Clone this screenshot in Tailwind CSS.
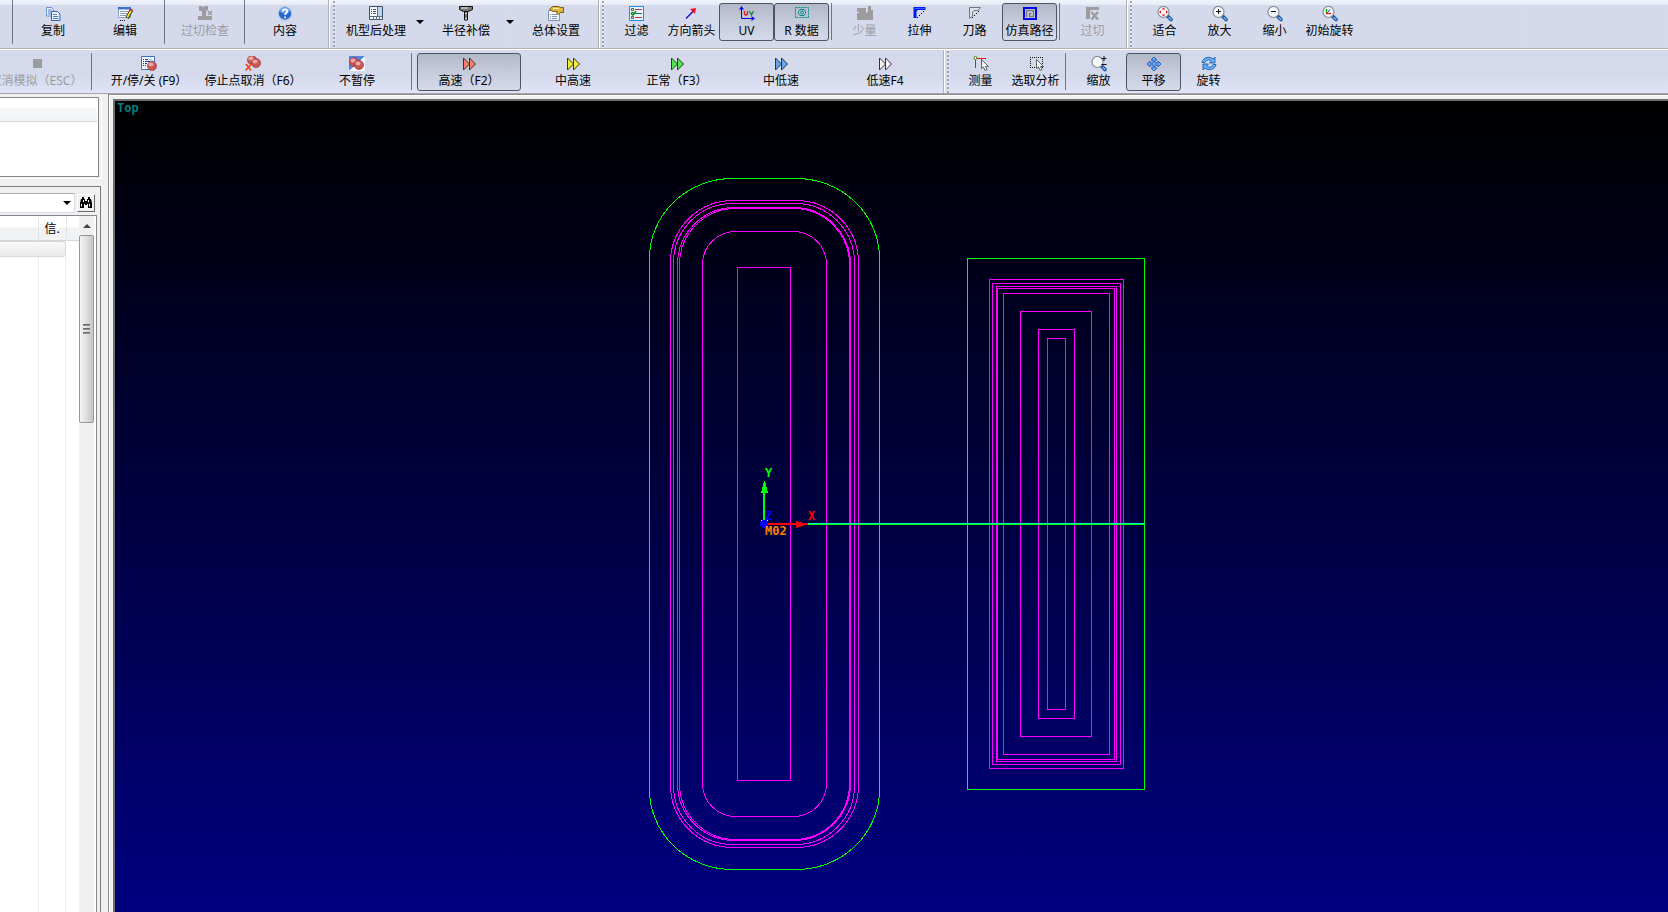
<!DOCTYPE html>
<html lang="zh-CN">
<head>
    <meta charset="UTF-8">
    <meta name="viewport" content="width=device-width, initial-scale=1.0">
    <title>刀路仿真</title>
    <script src="https://cdn.jsdelivr.net/npm/@tailwindcss/browser@4"></script>
</head>
<body class="h-screen flex flex-col overflow-hidden bg-[#f0f0f0] font-['Noto_Sans','Noto_Sans_CJK_SC',sans-serif] text-xs leading-[18px] text-black">

    <!-- shared icon parts -->
    <svg class="hidden">
        <symbol id="ff" viewBox="0 0 16 16">
            <path d="M2.500 2v12l6-6zM8.500 2v12l6-6z" stroke="#333" stroke-width="1"/>
        </symbol>
        <symbol id="lens" viewBox="0 0 16 16">
            <path d="M10.500 10l3.500 3.500" stroke="#1c4fa0" stroke-width="3.600" stroke-linecap="round"/>
            <path d="M12 11.500l2 2" stroke="#7ab4f0" stroke-width="1.500" stroke-linecap="round"/>
            <circle cx="6.500" cy="6" r="5.500" fill="#f4f8fa" stroke="#858d95" stroke-width="1.200"/>
        </symbol>
        <symbol id="ball" viewBox="0 0 10 10">
            <circle cx="5" cy="5" r="4.600" fill="#c85454" stroke="#983838" stroke-width=".6"/>
            <ellipse cx="4" cy="3.500" rx="2.600" ry="1.900" fill="#eaa8a4"/>
        </symbol>
    </svg>

    <header class="shrink-0">
        <!-- first toolbar row -->
        <div class="flex h-[50px] border-b border-white bg-linear-to-b from-[#f1f4fb] from-0% via-[#e6ebf6] via-10% to-[#d4daec] to-10%">
            <div role="toolbar" aria-label="编辑" class="flex shrink-0 h-[49px] pt-[3px] pl-[9px] pr-[7px] border-r border-b border-[#b1b1b4]">
                <span class="w-2 shrink-0 -mt-[3px] h-11 pl-[3px]"><i class="block w-px h-full bg-[#6f7687]"></i></span>
                <button class="w-[72px] h-[38px] flex flex-col items-center pt-[3px] whitespace-nowrap">
                    <svg class="size-4" viewBox="0 0 16 16"><path d="M1.500 1.500h5l2 2v6.500h-7z" fill="#eef4fd" stroke="#6b93cd"/><path d="M3 4h4M3 6h4M3 8h3" stroke="#4f7fc4"/><path d="M6.500 5.500h6l2.500 2.500v6.500H6.500z" fill="#eaf2fd" stroke="#2f63ad"/><path d="M8 8.500h4M8 10.500h5.500M8 12.500h5.500" stroke="#4f7fc4"/></svg>
                    <span>复制</span>
                </button>
                <button class="w-[72px] h-[38px] flex flex-col items-center pt-[3px] whitespace-nowrap">
                    <svg class="size-4" viewBox="0 0 16 16"><path d="M1.500 1.500h12v10h-12z" fill="#fff" stroke="#8ba0c4"/><path d="M1 1h13v2.500H1z" fill="#3b6fd0"/><path d="M3 5.500h8M3 7.500h7M3 9.500h6" stroke="#8b9bb8"/><path d="M10 12l4.500-8" stroke="#222" stroke-width="3.600"/><path d="M10.200 11.500l4-7" stroke="#f4dc28" stroke-width="2"/><path d="M13.500 3.500l2 1" stroke="#d33" stroke-width="2"/><path d="M3 14.500h6" stroke="#111" stroke-dasharray="1 1"/></svg>
                    <span>编辑</span>
                </button>
                <span class="w-2 shrink-0 -mt-[3px] h-11 pl-[3px]"><i class="block w-px h-full bg-[#6f7687]"></i></span>
                <button disabled class="w-[72px] h-[38px] flex flex-col items-center pt-[3px] whitespace-nowrap text-[#9c9c9f]">
                    <svg class="size-4" viewBox="0 0 16 16"><path d="M2 0h3v1h2V0h4v4L9 5v5h6v4H1v-4h4V5H2z" fill="#9c9c9f"/><path d="M11 5l4 4M15 5l-4 4" stroke="#9c9c9f" stroke-width="1.600"/></svg>
                    <span>过切检查</span>
                </button>
                <span class="w-2 shrink-0 -mt-[3px] h-11 pl-[3px]"><i class="block w-px h-full bg-[#6f7687]"></i></span>
                <button class="w-[72px] h-[38px] flex flex-col items-center pt-[3px] whitespace-nowrap">
                    <svg class="size-4" viewBox="0 0 16 16"><circle cx="8" cy="7.500" r="6.800" fill="#2468d0" stroke="#bccbe6" stroke-width="1.300"/><ellipse cx="8" cy="4.500" rx="5" ry="3" fill="#6ea6ee"/><path d="M5.700 5.600c0-3 4.700-3 4.700-.3 0 1.800-2.300 1.700-2.300 3.700M8 10.500v1.700" fill="none" stroke="#fff" stroke-width="1.700"/></svg>
                    <span>内容</span>
                </button>
            </div>

            <div role="toolbar" aria-label="设置" class="flex shrink-0 h-[49px] pt-[3px] pr-1.5 border-r border-b border-[#b1b1b4]">
                <span class="w-[11px] shrink-0 -mt-[3px] h-12 pl-[3px] border-l border-white"><i class="block w-[3px] h-full bg-[radial-gradient(circle_at_1px_2px,#9da2b1_1px,#f2f4f9_1px,transparent_2px)] bg-[length:3px_4px]"></i></span>
                <button class="w-[72px] h-[38px] flex flex-col items-center pt-[3px] whitespace-nowrap">
                    <svg class="size-4" viewBox="0 0 16 16"><path d="M1.500.5h13v13h-13z" fill="#f4f9fd" stroke="#3d5068"/><path d="M10 1h4v9h-4z" fill="#b9d4ea"/><path d="M2 10.500h12M9.500 1v9M5.500 11v3M8.500 11v3M11.500 11v3" stroke="#5b6f86"/><path d="M3 3.500h1m1 0h3M3 5.500h1m1 0h3M3 7.500h1m1 0h3" stroke="#555"/></svg>
                    <span>机型后处理</span>
                </button>
                <button aria-label="机型后处理选项" class="w-[18px] h-[38px] flex pt-[17px] pl-1"><svg class="w-2 h-1" viewBox="0 0 8 4"><path d="M0 0h8L4 4z"/></svg></button>
                <button class="w-[72px] h-[38px] flex flex-col items-center pt-[3px] whitespace-nowrap">
                    <svg class="size-4" viewBox="0 0 16 16"><path d="M1.500.5h13v3l-4 2h-5l-4-2z" fill="#777" stroke="#111"/><path d="M3 2h7" stroke="#eee"/><path d="M6.500 6h3v8h-3z" fill="#ddd" stroke="#111"/><path d="M6 9h4M6 11h4" stroke="#111"/></svg>
                    <span>半径补偿</span>
                </button>
                <button aria-label="半径补偿选项" class="w-[18px] h-[38px] flex pt-[17px] pl-1"><svg class="w-2 h-1" viewBox="0 0 8 4"><path d="M0 0h8L4 4z"/></svg></button>
                <button class="w-[72px] h-[38px] flex flex-col items-center pt-[3px] whitespace-nowrap">
                    <svg class="size-4" viewBox="0 0 16 16"><path d="M.5 4.500h11v10H.5z" fill="#f7fafe" stroke="#7e90ac"/><path d="M2 8.500h1m1 0h5M2 10.500h1m1 0h5M2 12.500h1m1 0h5" stroke="#7e93b8"/><path d="M1.500 3.500l3-3h6l2 1H15.500v5h-3l-2 2-2-1 1-2H6L4 5z" fill="#e0b840" stroke="#6e5010" stroke-width=".9"/><path d="M5 2.500h6" stroke="#fff2a4"/></svg>
                    <span>总体设置</span>
                </button>
            </div>

            <div role="toolbar" aria-label="显示" class="flex shrink-0 h-[49px] pt-[3px] pr-1.5 border-r border-b border-[#b1b1b4]">
                <span class="w-2.5 shrink-0 -mt-[3px] h-12 pl-[2px] border-l border-white"><i class="block w-[3px] h-full bg-[radial-gradient(circle_at_1px_2px,#9da2b1_1px,#f2f4f9_1px,transparent_2px)] bg-[length:3px_4px]"></i></span>
                <button class="w-[55px] h-[38px] flex flex-col items-center pt-[3px] whitespace-nowrap">
                    <svg class="size-4" viewBox="0 0 16 16"><path d="M.5.5h14v14H.5z" fill="#eaf4ff" stroke="#1690f0"/><path d="M2.500 2.500h2v2h-2zM2.500 6.500h2v2h-2zM2.500 10.500h2v2h-2z" fill="#fff" stroke="#555"/><path d="M6 3.500h7M6 11.500h7" stroke="#c03048"/><path d="M6 7.500h7" stroke="#187050"/><path d="M2 7l2 2 3-4" fill="none" stroke="#00a000" stroke-width="1.500"/></svg>
                    <span>过滤</span>
                </button>
                <button class="w-[55px] h-[38px] flex flex-col items-center pt-[3px] whitespace-nowrap">
                    <svg class="size-4" viewBox="0 0 16 16"><path d="M2 12.500l8-8" stroke="#0000d0" stroke-width="1.300"/><path d="M6 3l6-1-1 6z" fill="#f01020"/></svg>
                    <span>方向箭头</span>
                </button>
                <button aria-pressed="true" class="w-[55px] h-[38px] flex flex-col items-center pt-0.5 whitespace-nowrap border border-[#50545f] rounded-[3px] bg-linear-to-b from-[#b3b8c8] via-[#c6cbdb] to-[#d5daea]">
                    <svg class="size-4" viewBox="0 0 16 16"><path d="M2.500 1v11.500h12" fill="none" stroke="#0000f0"/><path d="M0 3.500L2.500 0 5 3.500zM12.500 10l3.500 2.500-3.500 2.500z" fill="#0000f0"/><path d="M5.500 5v3q1.500 2 3 0V5" fill="none" stroke="#e02020" stroke-width="1.300"/><path d="M10.500 5l2 4 2-4" fill="none" stroke="#008030" stroke-width="1.200"/></svg>
                    <span>UV</span>
                </button>
                <button aria-pressed="true" class="w-[55px] h-[38px] flex flex-col items-center pt-0.5 whitespace-nowrap border border-[#50545f] rounded-[3px] bg-linear-to-b from-[#b3b8c8] via-[#c6cbdb] to-[#d5daea]">
                    <svg class="size-4" viewBox="0 0 16 16"><g fill="none" stroke="#008c8c"><path d="M1.500 1.500h13v10h-13z" stroke-dasharray="2 1"/><path d="M6 3.500h4l1.500 2v2l-1.500 2H6l-1.500-2v-2z"/><circle cx="8" cy="6.500" r="1.500"/></g></svg>
                    <span>R 数据</span>
                </button>
                <span class="w-2 shrink-0 h-[37px] pl-[2px]"><i class="block w-px h-full bg-[#6f7687]"></i></span>
                <button disabled class="w-[55px] h-[38px] flex flex-col items-center pt-[3px] whitespace-nowrap text-[#9c9c9f]">
                    <svg class="size-4" viewBox="0 0 16 16"><path d="M0 2h9v4l-1 1 3-1V0h3v4h2v10H0V7h2V6H0z" fill="#9c9c9f"/></svg>
                    <span>少量</span>
                </button>
                <button class="w-[55px] h-[38px] flex flex-col items-center pt-[3px] whitespace-nowrap">
                    <svg class="size-4" viewBox="0 0 16 16"><path d="M1.500 1h12v3H6L4.500 5.500V12h-3z" fill="#0018f8"/><path d="M2.500 2.500h10" stroke="#2860ff"/><path d="M5 12l8-8" stroke="#000" stroke-dasharray="1.400 1.400"/></svg>
                    <span>拉伸</span>
                </button>
                <button class="w-[55px] h-[38px] flex flex-col items-center pt-[3px] whitespace-nowrap">
                    <svg class="size-4" viewBox="0 0 16 16"><path d="M2.500 12.500v-11h11l-2.500 3H7L5.500 6v4z" fill="#dfe3ee" stroke="#777"/><path d="M5 12l8-8" stroke="#000" stroke-dasharray="1.400 1.400"/></svg>
                    <span>刀路</span>
                </button>
                <button aria-pressed="true" class="w-[55px] h-[38px] flex flex-col items-center pt-0.5 whitespace-nowrap border border-[#50545f] rounded-[3px] bg-linear-to-b from-[#b3b8c8] via-[#c6cbdb] to-[#d5daea]">
                    <svg class="size-4" viewBox="0 0 16 16"><path d="M2 2h12v11H2z" fill="#ccd0df" stroke="#0000f8" stroke-width="2"/><path d="M4.500 11V4.500h7v6h-4V7.500h2" fill="none" stroke="#777" stroke-width="1.400"/></svg>
                    <span>仿真路径</span>
                </button>
                <span class="w-2 shrink-0 h-[37px] pl-[2px]"><i class="block w-px h-full bg-[#6f7687]"></i></span>
                <button disabled class="w-[55px] h-[38px] flex flex-col items-center pt-[3px] whitespace-nowrap text-[#9c9c9f]">
                    <svg class="size-4" viewBox="0 0 16 16"><path d="M1 1h13v3H6L5 5.500V13H1z" fill="#9c9c9f"/><path d="M6.500 6l6.500 7.500M13 6l-6.500 7.500" stroke="#9c9c9f" stroke-width="2.500"/></svg>
                    <span>过切</span>
                </button>
            </div>

            <div role="toolbar" aria-label="缩放" class="flex grow h-[49px] pt-[3px] border-b border-[#b1b1b4]">
                <span class="w-2.5 shrink-0 -mt-[3px] h-12 pl-[2px] border-l border-white"><i class="block w-[3px] h-full bg-[radial-gradient(circle_at_1px_2px,#9da2b1_1px,#f2f4f9_1px,transparent_2px)] bg-[length:3px_4px]"></i></span>
                <button class="w-[55px] h-[38px] flex flex-col items-center pt-[3px] whitespace-nowrap">
                    <svg class="size-4" viewBox="0 0 16 16"><use href="#lens"/><path d="M6.500 1.500l1.800 2H4.700zM6.500 10.500l1.800-2H4.700zM2 6l2-1.800v3.600zM11 6L9 4.200v3.600z" fill="#e01818"/></svg>
                    <span>适合</span>
                </button>
                <button class="w-[55px] h-[38px] flex flex-col items-center pt-[3px] whitespace-nowrap">
                    <svg class="size-4" viewBox="0 0 16 16"><use href="#lens"/><path d="M4 5.500h5M6.500 3v5" stroke="#111"/></svg>
                    <span>放大</span>
                </button>
                <button class="w-[55px] h-[38px] flex flex-col items-center pt-[3px] whitespace-nowrap">
                    <svg class="size-4" viewBox="0 0 16 16"><use href="#lens"/><path d="M4 5.500h5" stroke="#111"/></svg>
                    <span>缩小</span>
                </button>
                <button class="w-[55px] h-[38px] flex flex-col items-center pt-[3px] whitespace-nowrap">
                    <svg class="size-4" viewBox="0 0 16 16"><use href="#lens"/><path d="M4.500 3v5" stroke="#00a000" stroke-width="1.300"/><path d="M4 7.500h5" stroke="#e01818" stroke-width="1.300"/><path d="M5.500 6.500l2.500-3" stroke="#1030e0"/></svg>
                    <span>初始旋转</span>
                </button>
            </div>
        </div>

        <!-- second toolbar row -->
        <div class="flex h-11 border-b border-[#a5a5b2] bg-linear-to-b from-[#d4daec] from-60% to-[#dfe5f6]">
            <div role="toolbar" aria-label="模拟" class="flex shrink-0 pt-[3px] pr-1.5 -ml-4 border-r border-[#b1b1b4]">
                <button disabled class="w-26 h-[38px] flex flex-col items-center pt-[3px] whitespace-nowrap text-[#9c9c9f]">
                    <svg class="size-4" viewBox="0 0 16 16"><path d="M5 3h9v9H5z" fill="#9c9c9f"/></svg>
                    <span>取消模拟（ESC）</span>
                </button>
                <span class="w-[9px] shrink-0 h-[37px] pl-[3px]"><i class="block w-px h-full bg-[#6f7687]"></i></span>
                <button class="w-26 h-[38px] flex flex-col items-center pt-[3px] whitespace-nowrap">
                    <svg class="size-4" viewBox="0 0 16 16"><path d="M.5.5h13v13H.5z" fill="#f4f9ff" stroke="#3a70c8"/><path d="M2 3.500h1m1 0h3M2 5.500h1m1 0h5M2 7.500h1m1 0h2M2 9.500h1m1 0h1" stroke="#103890"/><path d="M9 3l4 4" stroke="#a8c8ee" stroke-width="2"/><use href="#ball" x="6" y="5" width="10" height="10"/></svg>
                    <span>开/停/关 (F9）</span>
                </button>
                <button class="w-26 h-[38px] flex flex-col items-center pt-[3px] whitespace-nowrap">
                    <svg class="size-4" viewBox="0 0 16 16"><use href="#ball" x="2" y="-1" width="10" height="10"/><use href="#ball" x="6" y="2" width="10" height="10"/><path d="M1 8l5 6.500M6.500 8L.5 14.500" stroke="#f04818" stroke-width="1.700"/></svg>
                    <span>停止点取消（F6）</span>
                </button>
                <button class="w-26 h-[38px] flex flex-col items-center pt-[3px] whitespace-nowrap">
                    <svg class="size-4" viewBox="0 0 16 16"><path d="M0 0h16v15H0z" fill="#fff"/><path d="M0 0h16L1 14H0z" fill="#5584e0"/><use href="#ball" x="0" y="1" width="10" height="10"/><use href="#ball" x="5" y="4" width="10" height="10"/></svg>
                    <span>不暂停</span>
                </button>
                <span class="w-2 shrink-0 h-[37px] pl-[2px]"><i class="block w-px h-full bg-[#6f7687]"></i></span>
                <button aria-pressed="true" class="w-26 h-[38px] flex flex-col items-center pt-0.5 whitespace-nowrap border border-[#50545f] rounded-[3px] bg-linear-to-b from-[#b3b8c8] via-[#c6cbdb] to-[#d5daea]">
                    <svg class="size-4 fill-[#ff8068]"><use href="#ff"/></svg>
                    <span>高速（F2）</span>
                </button>
                <button class="w-26 h-[38px] flex flex-col items-center pt-[3px] whitespace-nowrap">
                    <svg class="size-4 fill-[#f4f030]"><use href="#ff"/></svg>
                    <span>中高速</span>
                </button>
                <button class="w-26 h-[38px] flex flex-col items-center pt-[3px] whitespace-nowrap">
                    <svg class="size-4 fill-[#50e850]"><use href="#ff"/></svg>
                    <span>正常（F3）</span>
                </button>
                <button class="w-26 h-[38px] flex flex-col items-center pt-[3px] whitespace-nowrap">
                    <svg class="size-4 fill-[#60a4f8]"><use href="#ff"/></svg>
                    <span>中低速</span>
                </button>
                <button class="w-26 h-[38px] flex flex-col items-center pt-[3px] whitespace-nowrap">
                    <svg class="size-4 fill-[#f4f4f4]"><use href="#ff"/></svg>
                    <span>低速F4</span>
                </button>
            </div>

            <div role="toolbar" aria-label="视图" class="flex grow pt-[3px]">
                <span class="w-[9px] shrink-0 -mt-[3px] h-[43px] pl-[2px] border-l border-white"><i class="block w-[3px] h-full bg-[radial-gradient(circle_at_1px_2px,#9da2b1_1px,#f2f4f9_1px,transparent_2px)] bg-[length:3px_4px]"></i></span>
                <button class="w-[55px] h-[38px] flex flex-col items-center pt-[3px] whitespace-nowrap">
                    <svg class="size-4" viewBox="0 0 16 16"><path d="M2.500 12V2.500H13M8.500 2v6" fill="none" stroke="#f01020"/><circle cx="2.500" cy="2" r="1.500" fill="#fff" stroke="#408000"/><path d="M8.500 3.500v9l2-1.500 1.500 3.500 2-1-1.500-3h3z" fill="#f4f4f4" stroke="#555" stroke-width=".9"/></svg>
                    <span>测量</span>
                </button>
                <button class="w-[55px] h-[38px] flex flex-col items-center pt-[3px] whitespace-nowrap">
                    <svg class="size-4" viewBox="0 0 16 16"><path d="M2 1.500h13M2 11.500h13M2.500 1v11M14.500 1v11" stroke="#111" stroke-dasharray="1 1"/><path d="M8.500 3.500v9l2-1.500 1.500 3.500 2-1-1.500-3h3z" fill="#f4f4f4" stroke="#555" stroke-width=".9"/></svg>
                    <span>选取分析</span>
                </button>
                <span class="w-2 shrink-0 h-[37px] pl-[2px]"><i class="block w-px h-full bg-[#6f7687]"></i></span>
                <button class="w-[55px] h-[38px] flex flex-col items-center pt-[3px] whitespace-nowrap">
                    <svg class="size-4" viewBox="0 0 16 16"><use href="#lens"/><path d="M10.500 2.500h5M13 0v5M10.500 8.500h5" stroke="#111"/></svg>
                    <span>缩放</span>
                </button>
                <button aria-pressed="true" class="w-[55px] h-[38px] flex flex-col items-center pt-0.5 whitespace-nowrap border border-[#50545f] rounded-[3px] bg-linear-to-b from-[#b3b8c8] via-[#c6cbdb] to-[#d5daea]">
                    <svg class="size-4" viewBox="0 0 16 16"><path d="M8 1l3 3H9v3h3V5l3 3-3 3V9H9v3h2l-3 3-3-3h2V9H4v2L1 8l3-3v2h3V4H5z" fill="#6cacf4" stroke="#1c58b8" stroke-width=".9"/></svg>
                    <span>平移</span>
                </button>
                <button class="w-[55px] h-[38px] flex flex-col items-center pt-[3px] whitespace-nowrap">
                    <svg class="size-4" viewBox="0 0 16 16"><path d="M1 6.500C2 1 9 0 12 3l2-2v6H8.500l2-2C8 3 5 4 4 6.500zM15 8.500c-1 5.500-8 6.500-11 3.500l-2 2V8h5.500l-2 2c2.500 2 5.500 1 6.500-1.500z" fill="#6cb0f4" stroke="#1c5cb0" stroke-width=".9"/></svg>
                    <span>旋转</span>
                </button>
            </div>
        </div>
    </header>

    <main class="flex grow min-h-0">
        <!-- side panels -->
        <aside class="w-[102px] shrink-0 flex flex-col">
            <section class="h-[85px] pt-[3px] pr-0.5 border-r border-b border-white">
                <div class="h-20 bg-white border-t border-r border-b border-[#828790] pt-2.5">
                    <div class="h-3.5 mr-px bg-linear-to-b from-[#f7f8fa] to-[#f1f2f4] border-b border-[#d5d5d5]"></div>
                </div>
            </section>
            <section class="mt-[7px] mr-px grow min-h-0 flex flex-col border-t border-r border-[#7b7b7b] pr-[3px]">
                <div class="flex items-center h-[28px] pt-1 gap-0.5">
                    <div class="relative w-[75px] shrink-0">
                        <select aria-label="筛选" class="appearance-none block w-full h-5 bg-white border-t border-r border-b border-[#d9dce3] border-t-[#abadb3]"><option></option></select>
                        <svg class="absolute right-1 top-2 w-2 h-1 pointer-events-none" viewBox="0 0 8 4"><path d="M0 0h8L4 4z"/></svg>
                    </div>
                    <button aria-label="查找" class="size-[18px] shrink-0 flex items-center justify-center bg-[#f0f0f0] border border-t-white border-l-white border-r-[#696969] border-b-[#696969]">
                        <svg class="w-3 h-3" viewBox="0 0 12 12"><path d="M2 0h2v2h1v2h2V2h1V0h2v2h1l1 4v5H8V7H7v1H5V7H4v4H0V6l1-4h1z"/><path d="M1.500 7v2.500M9.500 7v2.500M3.500 3v2M8.500 3v2" stroke="#fff"/></svg>
                    </button>
                </div>
                <div class="flex grow min-h-0 bg-white border-t border-r border-[#828790]">
                    <div class="relative grow flex flex-col pt-px">
                        <table class="w-full table-fixed border-collapse">
                            <colgroup><col class="w-[38px]"><col class="w-7"><col></colgroup>
                            <thead class="h-[23px] bg-linear-to-b from-white from-40% to-[#f1f2f4] to-50%">
                                <tr class="border-b border-[#d5d5d5]">
                                    <th aria-label="名称"></th>
                                    <th class="border-x border-[#e0e3e8] font-normal text-left pl-1.5 pt-0.5 h-[23px]">信.</th>
                                    <td></td>
                                </tr>
                            </thead>
                        </table>
                        <div class="grow grid grid-cols-[39px_27px] pt-px">
                            <div class="border-r border-[#e8f0fb]"></div>
                            <div class="border-r border-[#e8f0fb]"></div>
                        </div>
                        <div class="absolute left-0 top-[25px] w-[66px] h-4 border border-l-0 border-[#d9d9d9] rounded-r-[3px] bg-linear-to-b from-[#f8f8f8]/80 to-[#e5e5e5]/80"></div>
                    </div>
                    <div class="w-[15px] shrink-0 mr-0.5 bg-[#f0f0f0] flex flex-col">
                        <div class="h-[19px] flex justify-center items-center"><svg class="w-2 h-1" viewBox="0 0 8 4"><path d="M4 0l4 4H0z" fill="#444"/></svg></div>
                        <div class="h-[188px] border border-[#979797] rounded-[2px] bg-linear-to-r from-[#f5f5f5] via-[#dedee0] via-50% to-[#c4c4ca] flex flex-col items-center justify-center gap-0.5">
                            <i class="w-[7px] h-0.5 bg-linear-to-b from-[#555] to-[#aaa]"></i>
                            <i class="w-[7px] h-0.5 bg-linear-to-b from-[#555] to-[#aaa]"></i>
                            <i class="w-[7px] h-0.5 bg-linear-to-b from-[#555] to-[#aaa]"></i>
                        </div>
                    </div>
                </div>
            </section>
        </aside>

        <!-- tool path view -->
        <section class="ml-1.5 grow min-w-0 border-l border-t border-[#8d8d8d]">
            <div class="h-full border-l border-t border-white pl-[3px] pt-[3px]">
                <div class="relative h-full border-l-2 border-t-2 border-[#6c6e70] bg-linear-to-b/srgb from-black to-[#000080]">
                    <span class="absolute left-0.5 top-0 leading-[14px] font-bold font-['DejaVu_Sans_Mono',monospace] text-[#008080]">Top</span>
                    <svg class="block w-full h-full" viewBox="115 101 1553 811">
                        <g transform="translate(.5 .5)" fill="none" shape-rendering="crispEdges" stroke-width="1">
                            <g stroke="#00ff00">
                                <rect x="649" y="178" width="230" height="691" rx="83" ry="80"/>
                                <rect x="967" y="258" width="177" height="531"/>
                            </g>
                            <g stroke="#ff00ff">
                                <rect x="670" y="200" width="188" height="647" rx="62"/>
                                <rect x="673" y="203" width="181" height="641" rx="59"/>
                                <rect x="677" y="207" width="173" height="633" rx="57"/>
                                <rect x="679" y="208" width="170" height="631" rx="56"/>
                                <rect x="702" y="231" width="124" height="585" rx="33"/>
                                <rect x="737" y="267" width="53" height="513"/>
                                <rect x="989" y="279" width="134" height="489"/>
                                <rect x="992" y="283" width="128" height="481"/>
                                <rect x="996" y="286" width="120" height="475"/>
                                <rect x="997" y="288" width="117" height="471"/>
                                <rect x="1003" y="293" width="106" height="461"/>
                                <rect x="1020" y="311" width="71" height="425"/>
                                <rect x="1038" y="329" width="36" height="389"/>
                                <rect x="1047" y="338" width="18" height="371"/>
                            </g>
                        </g>
                        <!-- axes -->
                        <g shape-rendering="crispEdges">
                            <path d="M808 523h337v1H808z" fill="#00ffc0"/>
                            <path d="M808 524h337v1H808z" fill="#00ff00"/>
                            <path d="M763 490h2v32h-2zM764 481h1l3 12h-7z" fill="#00ff00"/>
                            <path d="M766 523h42v2h-42zM796 521l12 3-12 4z" fill="#ff0000"/>
                            <path d="M762 520h5l1 2v4l-2 2h-4l-2-2v-4z" fill="#0000ff"/>
                            <path d="M761 520h1v1h-1zM767 520h1v1h-1z" fill="#ffff80"/>
                        </g>
                        <g font-family="'DejaVu Sans Mono', monospace" font-size="12" font-weight="bold">
                            <text x="765" y="477" fill="#00ff00">Y</text>
                            <text x="808" y="520" fill="#ff0000">X</text>
                            <text x="765" y="520" fill="#0000ff">Z</text>
                            <text x="765" y="535" fill="#ff8000">M02</text>
                        </g>
                    </svg>
                </div>
            </div>
        </section>
    </main>
</body>
</html>
